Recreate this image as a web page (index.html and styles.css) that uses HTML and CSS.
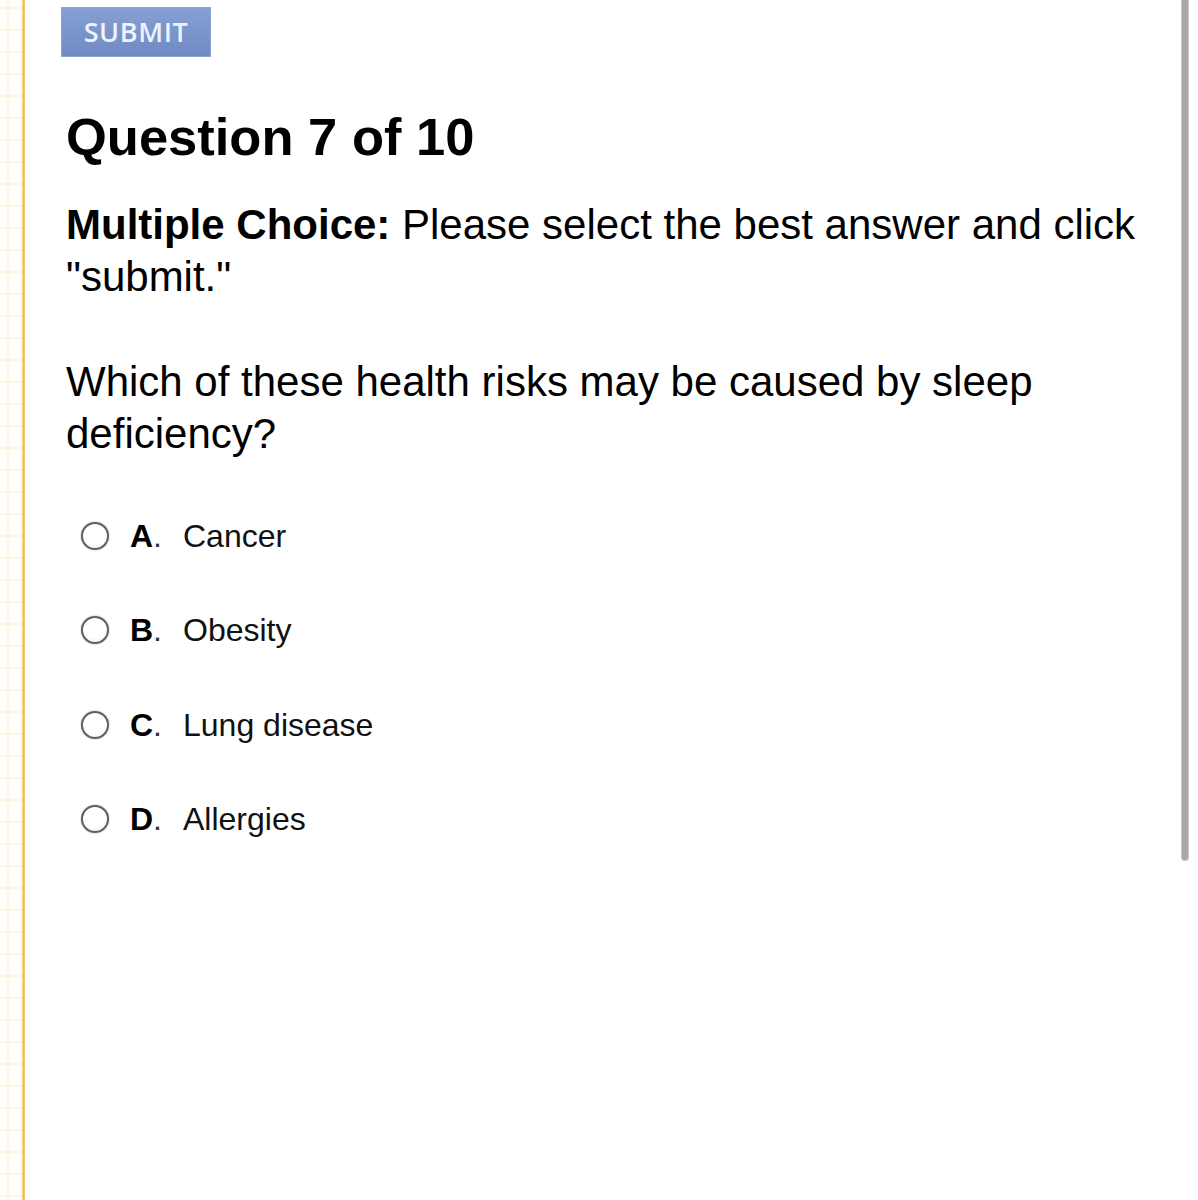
FILE: index.html
```html
<!DOCTYPE html>
<html lang="en">
<head>
<meta charset="utf-8">
<title>Question 7 of 10</title>
<link rel="stylesheet" href="styles.css">
</head>
<body>
<div class="page">
  <div class="grid-strip"></div>
  <div class="divider"></div>
  <main class="main">
    <button class="submit" type="button">SUBMIT</button>
    <h1 class="title">Question 7 of 10</h1>
    <p class="text instructions"><b>Multiple Choice:</b> Please select the best answer and click "submit."</p>
    <p class="text question">Which of these health risks may be caused by sleep deficiency?</p>
    <ul class="options">
      <li class="option"><span class="radio"></span><span class="letter">A<span class="dot">.</span></span><span class="answer">Cancer</span></li>
      <li class="option"><span class="radio"></span><span class="letter">B<span class="dot">.</span></span><span class="answer">Obesity</span></li>
      <li class="option"><span class="radio"></span><span class="letter">C<span class="dot">.</span></span><span class="answer">Lung disease</span></li>
      <li class="option"><span class="radio"></span><span class="letter">D<span class="dot">.</span></span><span class="answer">Allergies</span></li>
    </ul>
  </main>
  <div class="scrollbar"></div>
</div>
</body>
</html>
```
FILE: styles.css
```css
html, body {
  margin: 0;
  padding: 0;
  background: #ffffff;
}
.page {
  position: relative;
  display: flex;
  min-height: 1200px;
  font-family: "Liberation Sans", Arial, sans-serif;
  color: #000;
}
.grid-strip {
  width: 22px;
  flex: none;
  background-color: #fffefb;
  background-image:
    linear-gradient(to right, transparent 7px, #fdf6e4 7px, #fdf6e4 9px, transparent 9px),
    repeating-linear-gradient(to bottom, transparent 0, transparent 7px, #fdf6e4 7px, #fdf6e4 9px, transparent 9px, transparent 22px);
}
.divider {
  width: 3px;
  flex: none;
  background: linear-gradient(to right, #f6d98a, #eebf52 50%, #f3cf72);
}
.main {
  flex: 1;
  padding-left: 36px;
}
.submit {
  display: block;
  margin: 7px 0 0 0;
  width: 150px;
  height: 50px;
  padding: 0 0 2px 0;
  border: 1px solid #8ea6d6;
  background: linear-gradient(to bottom, #86a0d4, #7893ca 60%, #7089c2);
  color: #eef2fa;
  font-family: "Open Sans", "Noto Sans", sans-serif;
  font-size: 27px;
  font-weight: 600;
  letter-spacing: 0.6px;
  text-align: center;
}
.title {
  margin: 50px 0 0 5px;
  font-size: 52.5px;
  line-height: 60px;
  font-weight: bold;
}
.text {
  margin: 0 0 0 5px;
  font-size: 42px;
  line-height: 52px;
  padding-right: 40px;
}
.instructions {
  margin-top: 32px;
}
.question {
  margin-top: 53px;
}
.options {
  list-style: none;
  margin: 29px 0 0 20px;
  padding: 0;
}
.option {
  display: flex;
  align-items: center;
  height: 94.3px;
  font-size: 32px;
  line-height: 94px;
}
.radio {
  width: 24px;
  height: 24px;
  border: 2.5px solid #5f5f5f;
  border-radius: 50%;
  background: radial-gradient(circle at 50% 40%, #ffffff 55%, #ececec);
  box-shadow: 0 0 1.5px rgba(0, 0, 0, 0.45);
  flex: none;
  margin-right: 21px;
}
.letter {
  width: 53px;
  font-weight: bold;
  flex: none;
  color: #000;
}
.dot {
  font-weight: normal;
  color: #333;
}
.answer {
  color: #111;
}
.scrollbar {
  position: absolute;
  top: 0;
  left: 1181px;
  width: 6px;
  height: 860px;
  background: #a7a7a7;
  border: 1px solid #c9c9c9;
  border-top: none;
  border-radius: 0 0 4px 4px;
}
```
